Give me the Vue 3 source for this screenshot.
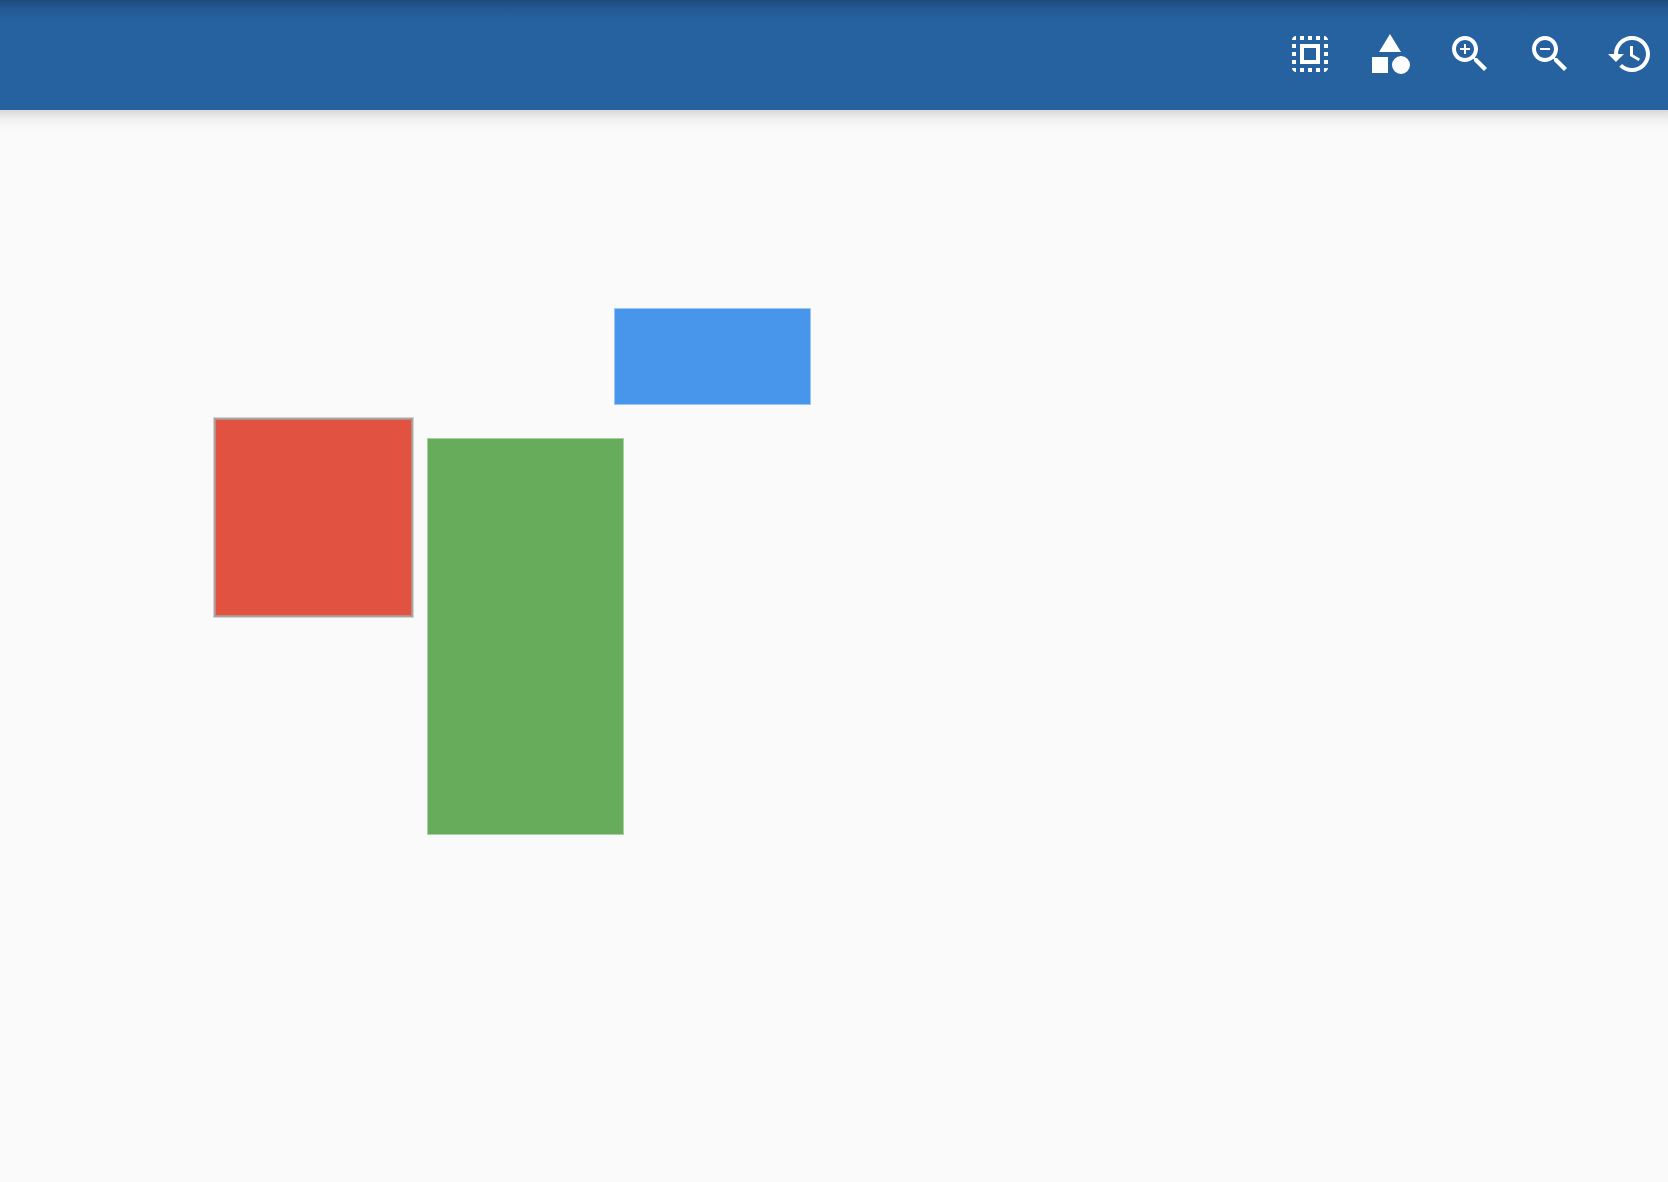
<script setup>
const tools = [
  { label: 'Select all', d: 'M3 5h2V3c-1.1 0-2 .9-2 2zm0 8h2v-2H3v2zm4 8h2v-2H7v2zM3 9h2V7H3v2zm10-6h-2v2h2V3zm6 0v2h2c0-1.1-.9-2-2-2zM5 21v-2H3c0 1.1.9 2 2 2zm-2-4h2v-2H3v2zM9 3H7v2h2V3zm2 18h2v-2h-2v2zm8-8h2v-2h-2v2zm0 8c1.1 0 2-.9 2-2h-2v2zm0-12h2V7h-2v2zm0 8h2v-2h-2v2zm-4 4h2v-2h-2v2zm0-16h2V3h-2v2zM7 17h10V7H7v10zm2-8h6v6H9V9z' },
  { label: 'Shapes', d: 'M12 2l-5.5 9h11zM3 13.5h8v8H3zM17.5 13a4.5 4.5 0 1 0 0 9 4.5 4.5 0 0 0 0-9z' },
  { label: 'Zoom in', d: 'M15.5 14h-.79l-.28-.27C15.41 12.59 16 11.11 16 9.5 16 5.91 13.09 3 9.5 3S3 5.91 3 9.5 5.91 16 9.5 16c1.61 0 3.09-.59 4.23-1.57l.27.28v.79l5 4.99L20.49 19l-4.99-5zm-6 0C7.01 14 5 11.99 5 9.5S7.01 5 9.5 5 14 7.01 14 9.5 11.99 14 9.5 14zM12 10h-2v2H9v-2H7V9h2V7h1v2h2v1z' },
  { label: 'Zoom out', d: 'M15.5 14h-.79l-.28-.27C15.41 12.59 16 11.11 16 9.5 16 5.91 13.09 3 9.5 3S3 5.91 3 9.5 5.91 16 9.5 16c1.61 0 3.09-.59 4.23-1.57l.27.28v.79l5 4.99L20.49 19l-4.99-5zm-6 0C7.01 14 5 11.99 5 9.5S7.01 5 9.5 5 14 7.01 14 9.5 11.99 14 9.5 14zM7 9h5v1H7z' },
  { label: 'Reset view', d: 'M13 3c-4.97 0-9 4.03-9 9H1l3.89 3.89.07.14L9 12H6c0-3.87 3.13-7 7-7s7 3.13 7 7-3.13 7-7 7c-1.93 0-3.68-.79-4.94-2.06l-1.42 1.42C8.27 19.99 10.51 21 13 21c4.97 0 9-4.03 9-9s-4.03-9-9-9zm-1 5v5l4.28 2.54.72-1.21-3.5-2.08V8H12z' }
]
</script>

<template>
  <div class="app">
    <header class="toolbar">
      <button v-for="tool in tools" :key="tool.label" type="button" class="tool" :aria-label="tool.label">
        <svg viewBox="0 0 24 24" aria-hidden="true"><path :d="tool.d" /></svg>
      </button>
    </header>
    <main class="canvas">
      <div class="shape red"></div>
      <div class="shape green"></div>
      <div class="shape blue"></div>
    </main>
  </div>
</template>

<style>
body {
  margin: 0;
  background: #fafafa;
}
</style>

<style scoped>
.app {
  display: flex;
  flex-direction: column;
  min-height: 100vh;
  font-family: Roboto, sans-serif;
}
.toolbar {
  display: flex;
  justify-content: flex-end;
  gap: 32px;
  padding: 30px 14px 32px;
  background: linear-gradient(#1d4a77 0, #20528a 4px, #245a95 10px, #2661a0 20px);
}
.tool {
  width: 48px;
  height: 48px;
  padding: 0;
  border: 0;
  background: none;
  cursor: pointer;
}
.tool svg {
  display: block;
  width: 48px;
  height: 48px;
  fill: #fff;
}
.canvas {
  position: relative;
  flex: 1;
  background: linear-gradient(#d9d9d9 0, #e6e6e6 5px, #f1f1f1 10px, #f8f8f8 16px, #fafafa 22px);
}
.shape {
  position: absolute;
  box-sizing: border-box;
}
.red {
  left: 214px;
  top: 308px;
  width: 199px;
  height: 199px;
  background: #e15241;
  border: 1px solid #a6a4a3;
  box-shadow: 0 0 0 1px #d4d4d4, inset 0 0 0 1px #bb8c82;
}
.green {
  left: 427px;
  top: 328px;
  width: 197px;
  height: 397px;
  background: #67ac5b;
  border: 1px solid #a9d0a3;
}
.blue {
  left: 614px;
  top: 198px;
  width: 197px;
  height: 97px;
  background: #4896ec;
  border: 1px solid #9cc6f4;
}
</style>
